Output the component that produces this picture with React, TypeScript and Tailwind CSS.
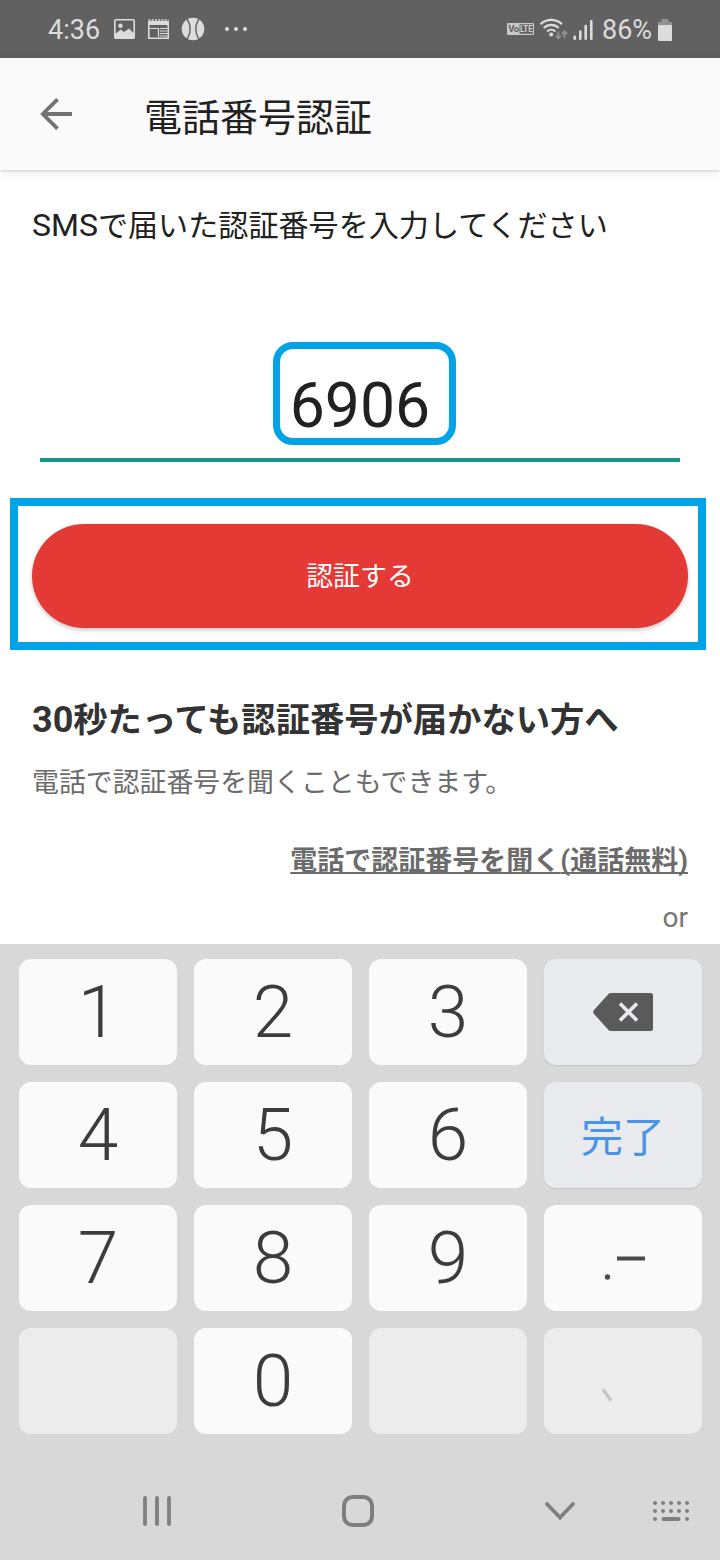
import type { ReactNode } from 'react';

function StatusBar() {
  return (
    <div className="flex h-[58px] items-center bg-[#616161] pl-12 text-[27px] leading-none text-[#dcdcdc]">
      <span className="w-[66px] pt-[3px]">4:36</span>
      <svg width="21" height="20" viewBox="0 0 21 20" fill="none">
        <rect x="0.8" y="0.8" width="19.4" height="18.4" rx="1" stroke="currentColor" strokeWidth="1.6" />
        <circle cx="6.5" cy="6.7" r="2.2" fill="currentColor" />
        <path d="M1 15l6-4.500 3 2.500 5-3.500 5 5v5H1z" fill="currentColor" />
      </svg>
      <svg className="ml-[13px]" width="21" height="20" viewBox="0 0 21 20" fill="none">
        <path d="M.8 2v17.200h19.400V2" stroke="currentColor" strokeWidth="1.6" />
        <path d="M.5 1h20" stroke="currentColor" strokeWidth="1.6" strokeDasharray="2 1.2" />
        <path d="M1 4h19" stroke="currentColor" strokeWidth="4" />
        <path d="M2 9.500h8.500V18" stroke="currentColor" strokeWidth="1.2" />
        <path d="M12 9.500h7M12 12h7M12 14.500h7M12 17h7" stroke="currentColor" strokeWidth="1.2" />
      </svg>
      <svg className="ml-[12px]" width="24" height="24" viewBox="0 0 24 24" fill="none">
        <circle cx="12" cy="12" r="11.3" fill="currentColor" />
        <path d="M5.5 1.5c4.8 6 4.8 15 0 21M18.5 1.5c-4.8 6-4.8 15 0 21" stroke="#616161" strokeWidth="1.4" />
      </svg>
      <svg className="ml-[19px]" width="24" height="6" viewBox="0 0 24 6" fill="currentColor">
        <circle cx="3" cy="3" r="2" />
        <circle cx="12" cy="3" r="2" />
        <circle cx="21" cy="3" r="2" />
      </svg>

      <svg className="ml-auto" width="27" height="12" viewBox="0 0 27 12">
        <rect width="27" height="12" rx="1" fill="#c9c9c9" />
        <rect x="12.500" y="1.200" width="13.400" height="9.600" fill="#616161" />
        <text x="1.200" y="9.400" fontSize="9.500" fontWeight="700" textLength="11" fill="#616161">Vo</text>
        <text x="13" y="9.400" fontSize="9.500" fontWeight="700" textLength="12.500" lengthAdjust="spacingAndGlyphs" fill="#d0d0d0">LTE</text>
      </svg>
      <svg className="ml-[5px]" width="30" height="22" viewBox="0 0 30 22" fill="none">
        <g stroke="currentColor" strokeWidth="2.1">
          <path d="M1.5 6.2a15.5 15.5 0 0 1 21.5 0" />
          <path d="M4.8 9.9a10.6 10.6 0 0 1 14.9 0" />
          <path d="M8 13.4a6.2 6.2 0 0 1 8.4 0" />
        </g>
        <circle cx="12.2" cy="16.5" r="2" fill="currentColor" />
        <g stroke="#929292" strokeWidth="1.8">
          <path d="M19.300 13.500v6.500M16.700 17.500l2.600 3 2.600-3" />
          <path d="M25.500 20v-6.500M22.900 16.200l2.600-3 2.600 3" />
        </g>
      </svg>
      <svg className="mt-[2px] ml-[4px]" width="20" height="22" viewBox="0 0 20 22" fill="none" stroke="currentColor" strokeWidth="2.600" strokeLinecap="round">
        <path d="M1.700 17.800v1.900M7.300 12.500v7.200M12.700 7v12.700M18.300 2.200v17.500" />
      </svg>
      <span className="ml-[9px] w-[51px] pt-[3px]">86%</span>
      <svg className="mt-[2px] mr-[48px] ml-[5px]" width="14" height="22" viewBox="0 0 14 22">
        <path d="M3.500 0h7v3H14v3H0V3h3.500z" fill="#929292" />
        <rect y="6" width="14" height="16" rx="1" fill="currentColor" />
      </svg>
    </div>
  );
}

type KeyProps = { tone?: 'light' | 'action' | 'disabled'; children?: ReactNode };

const tones = {
  light: 'bg-[#fafafa]',
  action: 'bg-[#e8eaed] shadow-[0_1px_1px_#c4c5c8]',
  disabled: 'bg-[#ececec]',
};

function Key({ tone = 'light', children }: KeyProps) {
  return (
    <button className={`flex h-[106px] items-center justify-center rounded-xl text-[73px] leading-none font-light text-[#3c3c3c] ${tones[tone]}`}>
      {children}
    </button>
  );
}

function Keypad() {
  return (
    <div className="grid grid-cols-4 gap-[17px] pt-[15px] pr-[18px] pl-[19px]">
      <Key>1</Key>
      <Key>2</Key>
      <Key>3</Key>
      <Key tone="action">
        <svg width="60" height="38" viewBox="0 0 60 38" fill="none">
          <path d="M18 0h39.500a2.500 2.500 0 0 1 2.500 2.500v33a2.500 2.500 0 0 1-2.500 2.500H18q-1.500 0-2.500-1L.8 20.700q-1.300-1.700 0-3.400L15.500 1q1-1 2.500-1z" fill="#5a5a5a" />
          <path d="M27 10.500l17 17M44 10.500l-17 17" stroke="#e8eaed" strokeWidth="3.600" />
        </svg>
      </Key>
      <Key>4</Key>
      <Key>5</Key>
      <Key>6</Key>
      <Key tone="action">
        <span className="pt-[5px] text-[42px] font-normal text-[#4a94e8]">完了</span>
      </Key>
      <Key>7</Key>
      <Key>8</Key>
      <Key>9</Key>
      <Key>
        <svg className="mt-5 ml-[3px]" width="42" height="28" viewBox="0 0 42 28" fill="#4a4a4a">
          <circle cx="3.500" cy="23" r="2.700" />
          <rect x="13" y="2.500" width="28" height="4" />
        </svg>
      </Key>
      <Key tone="disabled" />
      <Key>0</Key>
      <Key tone="disabled" />
      <Key tone="disabled">
        <svg className="mt-[28px] mr-[32px]" width="12" height="14" viewBox="0 0 12 14" fill="none">
          <path d="M2 1.500l8 11" stroke="#c4c4c4" strokeWidth="3.200" />
        </svg>
      </Key>
    </div>
  );
}

function NavBar() {
  return (
    <div className="mt-[60px] flex h-[34px] items-center pl-[142px] text-[#7f7f7f]">
      <svg width="30" height="30" viewBox="0 0 30 30" fill="none" stroke="currentColor" strokeWidth="3.800" strokeLinecap="round">
        <path d="M3 2v26M15 2v26M27 2v26" />
      </svg>
      <svg className="ml-[170px]" width="32" height="32" viewBox="0 0 32 32" fill="none">
        <rect x="2" y="2" width="28" height="28" rx="8.500" stroke="currentColor" strokeWidth="4" />
      </svg>
      <svg className="ml-[170px]" width="32" height="20" viewBox="0 0 32 20" fill="none" stroke="currentColor" strokeWidth="3.800" strokeLinecap="round">
        <path d="M3 3l13 13.500L29 3" />
      </svg>
      <svg className="ml-[77px]" width="36" height="20" viewBox="0 0 36 20" fill="none" stroke="currentColor" strokeWidth="4" strokeLinecap="round">
        <path d="M2 2h.01M10 2h.01M18 2h.01M26 2h.01M34 2h.01" />
        <path d="M2 10h.01M10 10h.01M18 10h.01M26 10h.01M34 10h.01" />
        <path d="M2 18h.01M10.500 18h15M34 18h.01" />
      </svg>
    </div>
  );
}

export default function App() {
  return (
    <div className="flex h-[1560px] w-[720px] flex-col overflow-hidden bg-white font-[Roboto,'Noto_Sans_CJK_JP',sans-serif] text-[#212121]">
      <StatusBar />

      <header className="flex h-[112px] items-center bg-[#fafafa] pl-10 shadow-[0_1px_2px_rgba(0,0,0,0.14),0_3px_10px_rgba(0,0,0,0.08)]">
        <svg width="32" height="32" viewBox="0 0 32 32" fill="none" stroke="#737373" strokeWidth="3.800">
          <path d="M17.500 1.300L2.800 16l14.700 14.700M2.800 16H32" />
        </svg>
        <h1 className="ml-[72px] pt-[7px] text-[38px] leading-none">電話番号認証</h1>
      </header>

      <main className="flex h-[774px] shrink-0 flex-col">
        <p className="mt-[35px] ml-8 text-[30.100px] leading-10 whitespace-nowrap">
          <span className="text-[32px]">SMS</span>で届いた認証番号を入力してください
        </p>

        {/* Code input with its highlight */}
        <div className="mx-10 mt-[96px] flex h-[120px] justify-center border-b-4 border-[#16938a]">
          <div className="ml-[9px] flex h-[103px] w-[183px] items-end justify-center rounded-[20px] border-[7px] border-[#00a2e8] pr-[9px] text-[62.500px] leading-[64px]">
            6906
          </div>
        </div>

        <div className="mt-9 mr-[14px] ml-[10px] border-8 border-[#00a2e8] px-[14px] pt-[18px] pb-[14px]">
          <button className="-mr-4 flex h-[104px] w-[656px] items-center justify-center rounded-[52px] bg-[#e53935] pt-[3px] text-[26.900px] text-white shadow-[0_2px_4px_rgba(0,0,0,0.22)]">
            認証する
          </button>
        </div>

        <h2 className="mt-[49px] ml-8 text-[34.300px] leading-[42px] font-bold whitespace-nowrap text-[#333333]">
          <span className="text-[36px]">30</span>秒たっても認証番号が届かない方へ
        </h2>
        <p className="mt-[22px] ml-8 text-[26.900px] leading-[40px] text-[#6b6b6b]">電話で認証番号を聞くこともできます。</p>
        <a className="mt-[38px] mr-8 self-end text-[27px] leading-[40px] font-bold text-[#6b6b6b] underline decoration-[1.500px] underline-offset-[2px] [text-decoration-skip-ink:none]">
          電話で認証番号を聞く<span className="text-[28px]">(</span>通話無料<span className="text-[28px]">)</span>
        </a>
        <p className="mt-[17px] mr-8 self-end text-[28px] leading-10 text-[#757575]">or</p>
      </main>

      <div className="h-[616px] shrink-0 bg-[#d8d8d8]">
        <Keypad />
        <NavBar />
      </div>
    </div>
  );
}
